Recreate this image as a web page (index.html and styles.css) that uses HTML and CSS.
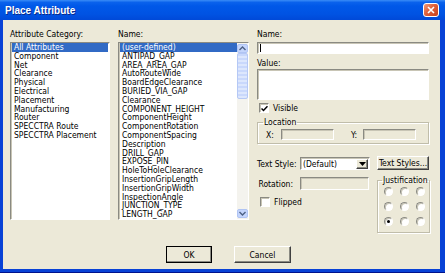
FILE: index.html
```html
<!DOCTYPE html>
<html lang="en">
<head>
  <meta charset="UTF-8" />
  <title>Place Attribute</title>
  <link rel="stylesheet" href="styles.css">
</head>
<body>
  <div class="window">
    <div class="titlebar">
      <span class="title">Place Attribute</span>
      <span class="close-btn">
        <svg width="8" height="8" viewBox="0 0 8 8"><path d="M1 1L7 7M7 1L1 7" stroke="#fff" stroke-width="1.6" fill="none"/></svg>
      </span>
    </div>

    <div class="dialog">
      <div class="main">
        <div class="col col-cat">
          <div class="label">Attribute Category:</div>
          <ul class="list sunken">
            <li class="selected">All Attributes</li>
            <li>Component</li>
            <li>Net</li>
            <li>Clearance</li>
            <li>Physical</li>
            <li>Electrical</li>
            <li>Placement</li>
            <li>Manufacturing</li>
            <li>Router</li>
            <li>SPECCTRA Route</li>
            <li>SPECCTRA Placement</li>
          </ul>
        </div>

        <div class="col col-name">
          <div class="label">Name:</div>
          <div class="list-wrap sunken">
            <ul class="list">
              <li class="selected">(user-defined)</li>
              <li>ANTIPAD_GAP</li>
              <li>AREA_AREA_GAP</li>
              <li>AutoRouteWide</li>
              <li>BoardEdgeClearance</li>
              <li>BURIED_VIA_GAP</li>
              <li>Clearance</li>
              <li>COMPONENT_HEIGHT</li>
              <li>ComponentHeight</li>
              <li>ComponentRotation</li>
              <li>ComponentSpacing</li>
              <li>Description</li>
              <li>DRILL_GAP</li>
              <li>EXPOSE_PIN</li>
              <li>HoleToHoleClearance</li>
              <li>InsertionGripLength</li>
              <li>InsertionGripWidth</li>
              <li>InspectionAngle</li>
              <li>JUNCTION_TYPE</li>
              <li>LENGTH_GAP</li>
            </ul>
            <div class="scrollbar">
              <span class="sb-btn"><svg width="7" height="5" viewBox="0 0 7 5"><path d="M0.5 4L3.5 1L6.5 4" stroke="#4d6185" stroke-width="1.4" fill="none"/></svg></span>
              <span class="sb-thumb"></span>
              <span class="sb-track"></span>
              <span class="sb-btn"><svg width="7" height="5" viewBox="0 0 7 5"><path d="M0.5 1L3.5 4L6.5 1" stroke="#4d6185" stroke-width="1.4" fill="none"/></svg></span>
            </div>
          </div>
        </div>

        <div class="col col-props">
          <div class="label">Name:</div>
          <div class="field sunken name-input"><span class="caret"></span></div>
          <div class="label value-label">Value:</div>
          <div class="field sunken value-input"></div>

          <div class="check-row visible-row">
            <span class="checkbox sunken">
              <svg width="7" height="7" viewBox="0 0 7 7"><path d="M0.5 3.5L2.5 5.5L6.5 1.2" stroke="#000" stroke-width="1.5" fill="none"/></svg>
            </span>
            <span>Visible</span>
          </div>

          <fieldset class="group location">
            <legend>Location</legend>
            <div class="loc-row">
              <span class="loc-label">X:</span>
              <span class="field sunken disabled loc-input"></span>
              <span class="loc-label loc-y">Y:</span>
              <span class="field sunken disabled loc-input"></span>
            </div>
          </fieldset>

          <div class="lower">
            <div class="style-row">
              <span class="row-label">Text Style:</span>
              <span class="combo sunken">
                <span class="combo-text">(Default)</span>
                <span class="combo-btn raised">
                  <svg width="7" height="4" viewBox="0 0 7 4"><path d="M0 0H7L3.5 4Z" fill="#000"/></svg>
                </span>
              </span>
            </div>
            <button class="btn styles-btn">Text Styles...</button>

            <div class="left-lower">
              <div class="rot-row">
                <span class="row-label">Rotation:</span>
                <span class="field sunken disabled rot-input"></span>
              </div>
              <div class="check-row flipped-row">
                <span class="checkbox sunken"></span>
                <span>Flipped</span>
              </div>
            </div>

            <fieldset class="group justification">
              <legend>Justification</legend>
              <div class="radio-grid">
                <span class="radio"></span><span class="radio"></span><span class="radio"></span>
                <span class="radio"></span><span class="radio"></span><span class="radio"></span>
                <span class="radio checked"></span><span class="radio"></span><span class="radio"></span>
              </div>
            </fieldset>
          </div>
        </div>
      </div>

      <div class="buttons">
        <button class="btn default-btn ok-btn">OK</button>
        <button class="btn cancel-btn">Cancel</button>
      </div>
    </div>
  </div>
</body>
</html>
```

FILE: styles.css
```css
* {
  box-sizing: border-box;
}
body {
  margin: 0;
  font-family: "DejaVu Sans Condensed", "DejaVu Sans", sans-serif;
  font-size: 8.5px;
  color: #000;
  background: #fff;
}
.window {
  width: 445px;
  height: 273px;
  display: flex;
  flex-direction: column;
  background: #0842d6;
  border-bottom: 1px solid #00138c;
}
.titlebar {
  height: 20px;
  flex: none;
  display: flex;
  align-items: center;
  justify-content: space-between;
  padding: 0 6px 0 5px;
  background: linear-gradient(#3a8cf7 0%, #0a62ec 12%, #0058e8 30%, #0053e3 70%, #0049d8 100%);
}
.title {
  color: #fff;
  font-family: "Liberation Sans", Arial, sans-serif;
  font-weight: bold;
  font-size: 10px;
  text-shadow: 1px 1px 0 #0a2a8a;
}
.close-btn {
  width: 16px;
  height: 14px;
  display: flex;
  align-items: center;
  justify-content: center;
  border: 1px solid #fff;
  border-radius: 3px;
  background: linear-gradient(135deg, #f09a78 0%, #e0603a 45%, #c8401a 100%);
}
.dialog {
  flex: 1;
  margin: 0 5px 3px 3px;
  background: #ece9d8;
  padding: 9px 10px 0 7px;
}
.main {
  display: flex;
  align-items: flex-start;
  gap: 8px;
}
.label {
  line-height: 10px;
  height: 10px;
  margin-bottom: 3px;
  white-space: nowrap;
}
.sunken {
  border: 1px solid;
  border-color: #8a8a82 #fff #fff #8a8a82;
  box-shadow: inset 1px 1px 0 #c8c5b5;
  background: #fff;
}
.raised {
  border: 1px solid;
  border-color: #fff #404040 #404040 #fff;
  box-shadow: inset -1px -1px 0 #8a8a82;
  background: #ece9d8;
}
.col-cat {
  width: 100px;
}
.col-name {
  width: 131px;
}
.col-props {
  width: 173px;
}
.list {
  margin: 0;
  padding: 0;
  list-style: none;
  height: 178px;
  overflow: hidden;
}
.list li {
  height: 8.8px;
  line-height: 8.8px;
  padding-left: 2px;
  white-space: nowrap;
}
.list li.selected {
  background: #316ac5;
  color: #fff;
}
.col-cat .list {
  padding: 0 1px;
}
.list-wrap {
  height: 178px;
  display: flex;
  padding-left: 1px;
}
.list-wrap .list {
  flex: 1;
  height: auto;
}
.scrollbar {
  width: 11px;
  display: flex;
  flex-direction: column;
  background: #f4f3ee;
  padding: 1px 0;
}
.sb-btn {
  height: 9px;
  flex: none;
  display: flex;
  align-items: center;
  justify-content: center;
  background: #c4d5fc;
  border: 1px solid #b0c4f4;
  border-radius: 2px;
}
.sb-thumb {
  height: 46px;
  flex: none;
  background: repeating-linear-gradient(#c9d8fc 0 2px, #dde7fd 2px 4px);
  border: 1px solid #b5c8f5;
  border-radius: 2px;
}
.sb-track {
  flex: 1;
}
.field {
  display: block;
}
.field.disabled {
  background: #ece9d8;
}
.name-input {
  height: 12px;
  width: 172px;
  padding: 1px 2px;
}
.caret {
  display: block;
  width: 1px;
  height: 8px;
  background: #000;
}
.value-label {
  margin-top: 4px;
  margin-bottom: 1px;
}
.value-input {
  height: 31px;
  width: 172px;
}
.check-row {
  display: flex;
  align-items: center;
  gap: 4px;
  height: 10px;
  line-height: 10px;
}
.visible-row {
  margin-top: 3px;
  padding-left: 2px;
}
.checkbox {
  width: 10px;
  height: 10px;
  display: flex;
  align-items: center;
  justify-content: center;
}
.group {
  margin: 0;
  min-width: 0;
  border: 1px solid #c0bdaa;
  box-shadow: inset 1px 1px 0 #fff, 1px 1px 0 #fff;
}
.group legend {
  padding: 0 1px;
  line-height: 10px;
}
.location {
  margin-top: 4px;
  width: 172px;
  padding: 2px 4px 3px 8px;
}
.location legend {
  margin-left: -3px;
}
.loc-row {
  display: flex;
  align-items: center;
}
.loc-label {
  width: 15px;
}
.loc-y {
  margin-left: 17px;
  width: 12px;
}
.loc-input {
  width: 53px;
  height: 11px;
}
.lower {
  margin-top: 12px;
  display: grid;
  grid-template-columns: 116px 53px;
  column-gap: 4px;
  row-gap: 5px;
  align-items: start;
}
.style-row,
.rot-row {
  display: flex;
  align-items: center;
}
.style-row {
  margin-top: 1px;
}
.row-label {
  width: 43px;
  text-align: right;
  padding-right: 7px;
  white-space: nowrap;
}
.combo {
  width: 70px;
  height: 13px;
  display: flex;
  align-items: center;
  padding: 1px 1px 1px 2px;
}
.combo-text {
  flex: 1;
}
.combo-btn {
  width: 12px;
  height: 10px;
  display: flex;
  align-items: center;
  justify-content: center;
}
.btn {
  font-family: "DejaVu Sans Condensed", "DejaVu Sans", sans-serif;
  font-size: 8.5px;
  color: #000;
  padding: 0;
  border: 1px solid;
  border-color: #fff #404040 #404040 #fff;
  box-shadow: inset -1px -1px 0 #8a8a82;
  background: #ece9d8;
}
.styles-btn {
  height: 14px;
  width: 52px;
  white-space: nowrap;
}
.left-lower {
  padding-top: 2px;
}
.rot-input {
  width: 69px;
  height: 13px;
}
.flipped-row {
  margin-top: 7px;
  padding-left: 3px;
}
.justification {
  width: 53px;
  height: 58px;
  padding: 2px 6px 0 6px;
}
.justification legend {
  margin-left: -2px;
  white-space: nowrap;
}
.radio-grid {
  display: grid;
  grid-template-columns: repeat(3, 8px);
  grid-auto-rows: 8px;
  column-gap: 8px;
  row-gap: 7px;
}
.radio {
  width: 9px;
  height: 9px;
  border-radius: 50%;
  border: 1px solid;
  border-color: #8a8a82 #fff #fff #8a8a82;
  box-shadow: inset 1px 1px 0 #c8c5b5;
  background: #fff;
  display: flex;
  align-items: center;
  justify-content: center;
}
.radio.checked::after {
  content: "";
  width: 3px;
  height: 3px;
  border-radius: 50%;
  background: #000;
}
.buttons {
  display: flex;
  gap: 22px;
  margin-top: 13px;
  padding-left: 156px;
}
.ok-btn {
  width: 46px;
  height: 17px;
}
.default-btn {
  outline: 1px solid #000;
  outline-offset: -1px;
}
.cancel-btn {
  width: 57px;
  height: 17px;
}
```
